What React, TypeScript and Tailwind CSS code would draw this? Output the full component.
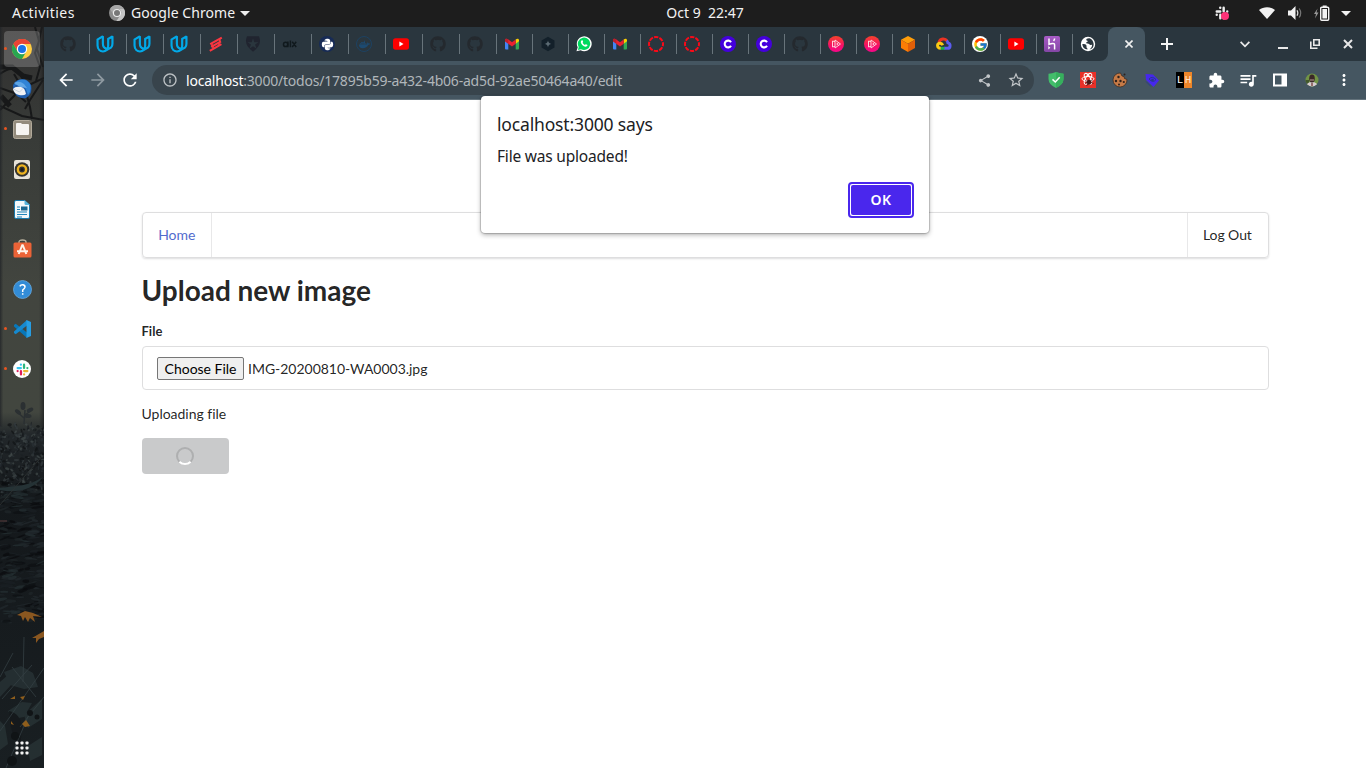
import React from "react";
import { FaGithub, FaDocker, FaPython } from "react-icons/fa";
import { SiUdacity } from "react-icons/si";
import { FcGoogle } from "react-icons/fc";
import {
  MdArrowBack,
  MdArrowForward,
  MdRefresh,
  MdInfoOutline,
  MdShare,
  MdStarBorder,
  MdExtension,
  MdQueueMusic,
  MdMoreVert,
} from "react-icons/md";

/* ---------- favicons ---------- */

const Github = () => <FaGithub size={16} color="#24292e" />;
const Udacity = () => <SiUdacity size={16} color="#02a9e8" stroke="#02a9e8" strokeWidth="1.600" className="overflow-visible" />;
const Youtube = () => (
  <svg width="16" height="16" viewBox="0 0 16 16">
    <rect y="2.3" width="16" height="11.4" rx="2.6" fill="#f00" />
    <path d="M6.4 5.6v4.8L10.5 8z" fill="#fff" />
  </svg>
);
const Stripe = () => (
  <svg width="16" height="16" viewBox="0 0 16 16" stroke="#fb3640" fill="none" strokeWidth="2.100">
    <path d="M2.200 8.200 13.800 1.700M3.200 10.800 13 5.300M1.800 14.800 13.400 8.200" />
    <path d="M4 7.500v3M11.800 3v3.500M5 10v2.500M11 6v3" strokeWidth="1.600" />
  </svg>
);
const Auth0 = () => (
  <svg width="16" height="16" viewBox="0 0 16 16">
    <path
      d="M2 .3h12q2.400 6-.8 10.200Q11 13.500 8 15.800 5 13.500 2.800 10.500-.4 6.300 2 .3zM8 2.300 6.700 6.200H2.600l3.300 2.400-1.300 4L8 10.200l3.400 2.400-1.300-4 3.300-2.400H9.300z"
      fill="#20242f"
      fillRule="evenodd"
    />
  </svg>
);
const Alx = () => (
  <svg width="16" height="16" viewBox="0 0 16 16" fill="none" stroke="#10191d" strokeWidth="1.500">
    <circle cx="3.600" cy="8.400" r="2.100" />
    <path d="M5.900 5.500v5.800M8.400 4.400v6.900M10.200 5.800l4 5.200M14.200 5.800l-4 5.200" />
  </svg>
);
const Python = () => (
  <span className="flex size-4 items-center justify-center rounded-full bg-[#172b56]">
    <FaPython size={13} color="#fff" />
  </span>
);
const Docker = () => (
  <span className="flex size-4 items-center justify-center rounded-full border border-[#1d4262]">
    <FaDocker size={11} color="#1d4a70" />
  </span>
);
const Gmail = () => (
  <svg width="16" height="16" viewBox="0 0 16 16">
    <path d="M1 4.5 4.3 7v6.6H2a1 1 0 0 1-1-1z" fill="#4285f4" />
    <path d="M11.7 7 15 4.5v8.1a1 1 0 0 1-1 1h-2.3z" fill="#34a853" />
    <path d="M11.7 3.5c1.7-1.3 3.3-.9 3.3 1v.7L11.7 7.7z" fill="#fbd000" />
    <path d="M1 4.3c0-1.8 1.7-2 3.3-.8L8 6.3l3.7-2.8v4.2L8 10.5 4.3 7.7 1 5.2z" fill="#ea2130" />
    <path d="M1 4.3C1 3.4 1.6 2.7 2.6 2.8c.6 0 1.1.3 1.7.7v4.2L1 5.2z" fill="#b9202c" />
  </svg>
);
const Hexagon = () => (
  <svg width="16" height="16" viewBox="0 0 16 16">
    <path d="M8 .7 14.5 4.4v7.2L8 15.3 1.5 11.6V4.4z" fill="#13202a" />
    <path d="M8 4.600Q8.400 7.600 11.400 8 8.400 8.400 8 11.400 7.600 8.400 4.600 8 7.600 7.600 8 4.600z" fill="#5b6a73" />
  </svg>
);
const Whatsapp = () => (
  <svg width="16" height="16" viewBox="0 0 17 17">
    <path d="M.5 16.300 1.800 12A7.900 7.900 0 1 1 5 15.200z" fill="#fff" />
    <path d="M2 14.900 2.900 11.700A6.600 6.600 0 1 1 5.300 14z" fill="#00d95f" />
    <path
      d="M5.900 4.800c.4-.5 1-.5 1.200 0l.5 1.300c.1.400-.5.900-.6 1.200.5 1 1.400 1.800 2.400 2.200.4-.1.800-.9 1.200-.8l1.300.6c.5.300.2 1-.1 1.400-1 .9-2.200.8-3.400.2A7 7 0 0 1 5.400 7.700c-.5-1.100-.3-2.200.5-2.900z"
      fill="#fff"
    />
  </svg>
);
const Canvas = () => (
  <svg width="16" height="16" viewBox="0 0 16 16" fill="none">
    <circle cx="8" cy="8" r="7" stroke="#fb0a18" strokeWidth="2" strokeDasharray="4.300 1.198" strokeDashoffset="2.150" />
  </svg>
);
const CircleC = () => (
  <svg width="16" height="16" viewBox="0 0 16 16">
    <circle cx="8" cy="8" r="8" fill="#4400dd" />
    <path d="M11 6.200A3.400 3.400 0 1 0 11 9.800" fill="none" stroke="#fff" strokeWidth="2.100" />
  </svg>
);
const Pluralsight = () => (
  <svg width="16" height="16" viewBox="0 0 16 16">
    <defs>
      <linearGradient id="ps" x1="0" y1="0" x2="0" y2="1">
        <stop offset="0" stopColor="#f5432a" />
        <stop offset=".6" stopColor="#f71067" />
        <stop offset="1" stopColor="#f6078a" />
      </linearGradient>
    </defs>
    <circle cx="8" cy="8" r="8" fill="url(#ps)" />
    <path d="M7 4v8l5.500-4zM7 5.700 4.500 5v6L7 10.300" fill="none" stroke="#ffd0dc" strokeWidth="1" />
    <path d="M8.700 6.500v3L10.800 8z" fill="#ffd0dc" />
  </svg>
);
const Cube = () => (
  <svg width="16" height="16" viewBox="0 0 16 16">
    <path d="M8 0l7 3.800L8 7.800 1 3.800z" fill="#ff9d0a" />
    <path d="M1 3.800l7 4V16l-7-4z" fill="#fb7d05" />
    <path d="M15 3.800l-7 4V16l7-4z" fill="#e15f08" />
  </svg>
);
const GCloud = () => (
  <svg width="16" height="16" viewBox="0 0 16 16" fill="none" strokeWidth="2.900">
    <path d="M3 6.300C4 2.300 9 1.900 11.200 5" stroke="#ea3323" />
    <path d="M10.600 4.600c.9.700 1.200 1.500 1.300 2.300 3 .6 3 5.400-.4 5.400H8" stroke="#5b5cf0" />
    <path d="M8.500 12.300H4" stroke="#1faf4b" />
    <path d="M4.600 12.300C.6 12 .7 7.200 3.800 7.200c1.500 0 2.500 1 2.900 2" stroke="#fbc913" />
  </svg>
);
const Google = () => (
  <span className="flex size-4 items-center justify-center rounded-full bg-white">
    <FcGoogle size={15} />
  </span>
);
const Heroku = () => (
  <svg width="16" height="16" viewBox="0 0 16 16">
    <defs>
      <linearGradient id="hk" x1="0" y1="0" x2="0" y2="1">
        <stop offset="0" stopColor="#a85cc6" />
        <stop offset="1" stopColor="#8346a5" />
      </linearGradient>
    </defs>
    <rect width="16" height="16" rx="1.800" fill="url(#hk)" />
    <path d="M5 2.600v5.800c1.900-.8 5.600-1.900 5.600.6v4.400M10.600 2.600c0 1-.5 1.700-1.100 2.300" fill="none" stroke="#fff" strokeWidth="1.500" />
    <path d="M4.300 10v3.500L6.300 11.800z" fill="#fff" />
  </svg>
);
const Globe = () => (
  <svg width="16" height="16" viewBox="0 0 16 16">
    <circle cx="8" cy="8" r="7.200" fill="#fff" />
    <path
      d="M9.500 2.200Q6 2 6.200 4.200q1.700 0 1.500 1.600Q5.500 6 6.600 7.500q2.800-.5 3.400 1.400l2.200-.2q.2 2.300-2.500 4.800Q13.800 12.500 13.700 8 13 3.500 9.500 2.200zM2.300 8q3.300-.4 4.200 1.400v2q1 .2 1 2.200Q2.600 13 2.300 8z"
      fill="#2a363e"
    />
  </svg>
);

const wideTabs = [Github, Udacity, Udacity, Udacity, Stripe, Auth0, Alx, Python, Docker, Youtube, Github, Github];
const narrowTabs = [
  Gmail, Hexagon, Whatsapp, Gmail, Canvas, Canvas, CircleC, CircleC, Github,
  Pluralsight, Pluralsight, Cube, GCloud, Google, Youtube, Heroku, Globe,
];

/* ---------- desktop bar ---------- */

const SlackMarks = ({ size, colors }: { size: number; colors: string[] }) => (
  <svg width={size} height={size} viewBox="0 0 16 16" strokeWidth="2.800" strokeLinecap="round" fill="none">
    <path d="M6 2v0M2 6.200h4" stroke={colors[0]} />
    <path d="M9.900 2v4M14 6.200v0" stroke={colors[1]} />
    <path d="M10 9.900h4M10 14v0" stroke={colors[2]} />
    <path d="M6.100 10v4M2 9.900v0" stroke={colors[3]} />
  </svg>
);

function TopBar() {
  return (
    <header className="grid h-[27px] shrink-0 grid-cols-3 items-center bg-[#1d1d1d] pb-px text-[14px] leading-[26px] text-[#f2f2f2]">
      <div className="flex items-center pl-3">
        <span className="w-[97px] tracking-[0.45px]">Activities</span>
        <svg width="16" height="16" viewBox="0 0 16 16">
          <circle cx="8" cy="8" r="8" fill="#8b8b8b" />
          <path d="M8 0a8 8 0 0 1 7 4H8a4 4 0 0 0-3.600 5.600L1 4a8 8 0 0 1 7-4z" fill="#a7a7a7" />
          <path d="M15 4a8 8 0 0 1-7.500 12l3.900-6a4 4 0 0 0-1.200-6z" fill="#c4c4c4" />
          <circle cx="8" cy="8" r="4.100" fill="#eee" />
          <circle cx="8" cy="8" r="3" fill="#777" />
        </svg>
        <span className="ml-[6px] tracking-[0.06px]">Google Chrome</span>
        <svg className="ml-[5px]" width="10" height="5" viewBox="0 0 10 5">
          <path d="M0 0h10L5 5z" fill="#eee" />
        </svg>
      </div>
      <div className="whitespace-pre pl-[211px]">Oct 9  22:47</div>
      <div className="flex items-center justify-end pr-[15px]">
        <span className="relative mr-[30px] flex">
          <SlackMarks size={14} colors={["#eee", "#eee", "#ddd", "#eee"]} />
          <i className="absolute top-[6px] left-[6px] size-2 rounded-full bg-[#ff3378]" />
        </span>
        <svg width="16" height="12" viewBox="0 0 16 12">
          <path d="M0 3C4.500-.8 11.500-.8 16 3L8 12z" fill="#f2f2f2" />
        </svg>
        <svg className="ml-[13px]" width="16" height="14" viewBox="0 0 16 14" fill="none">
          <path d="M0 4.500h3L7.500 0v14L3 9.500H0z" fill="#f2f2f2" />
          <path d="M9 4.300q1.700 2.700 0 5.400" stroke="#ddd" strokeWidth="1.200" />
          <path d="M11.200 2.500q3 4.500 0 9" stroke="#777" strokeWidth="1.200" />
        </svg>
        <svg className="ml-[10px]" width="16" height="16" viewBox="0 0 16 16">
          <path d="M3.600 3.500 0 9h2l-1 4.500L4.500 7.500h-2z" fill="#999" />
          <rect x="6.700" y="2.200" width="8" height="13" rx="1" fill="none" stroke="#f2f2f2" strokeWidth="1.400" />
          <path d="M8.700.5h4V2h-4zM8.400 4h4.600v9.500H8.400z" fill="#f2f2f2" />
        </svg>
        <svg className="ml-[11px]" width="10" height="5" viewBox="0 0 10 5">
          <path d="M0 0h10L5 5z" fill="#f2f2f2" />
        </svg>
      </div>
    </header>
  );
}

/* ---------- dock ---------- */

const bush = ["#343c3e", "#14181b", "#293134", "#0f1214", "#424a4a", "#1b2023"];
const undergrowth = ["#1f272a", "#0d1012", "#222a2d", "#0a0c0e", "#1a2023", "#253033"];

const leaves = Array.from({ length: 560 }, (_, i) => {
  const r = (k: number) => {
    const s = Math.sin((i + 1) * 12.9898 + k * 78.233) * 43758.5453;
    return s - Math.floor(s);
  };
  const inBush = i < 330;
  const x = r(1) * 48 - 2;
  return {
    x,
    y: inBush ? 395 + Math.abs(x - 22) * 0.2 + r(2) * 68 : 455 + r(2) * 140,
    len: inBush ? 2 + r(3) * 3.5 : 4 + r(3) * 12,
    w: inBush ? 1 + r(4) * 2 : 1 + r(4) * 2.6,
    angle: inBush ? r(5) * 180 : r(5) * 40 - 25,
    fill: (inBush ? bush : undergrowth)[Math.floor(r(6) * 6)],
  };
});

const Wallpaper = () => (
  <svg className="absolute inset-0" width="44" height="741" viewBox="0 0 44 741">
    <defs>
      <linearGradient id="wall" x1="0" y1="0" x2="0" y2="1">
        <stop offset="0" stopColor="#302f2f" />
        <stop offset=".15" stopColor="#383b38" />
        <stop offset=".35" stopColor="#42453f" />
        <stop offset=".52" stopColor="#42463f" />
        <stop offset=".55" stopColor="#22272a" />
        <stop offset=".64" stopColor="#14181b" />
        <stop offset="1" stopColor="#191f22" />
      </linearGradient>
      <linearGradient id="edge" x1="0" y1="0" x2="1" y2="0">
        <stop offset="0" stopColor="#202327" stopOpacity=".8" />
        <stop offset=".08" stopColor="#292c2c" stopOpacity="0" />
        <stop offset=".88" stopColor="#292c2c" stopOpacity="0" />
        <stop offset="1" stopColor="#17191a" stopOpacity=".7" />
      </linearGradient>
    </defs>
    <rect width="44" height="741" fill="url(#wall)" />
    <g fill="none" stroke="#171819">
      <path d="M35 0l4 14-4 12 5 14-4 14M42 0l-5 22 6 18M0 47c9-7 16-7 21 2l6 10 17-8M0 83l14-14 7-10-7-12M0 61l17 6 9 8M25 62l5 18 2 12M43 53 30 73l-5 9M0 79l22 10 22 4" strokeWidth="2" />
      <path d="M0 40h12l11 9 9 2M1 69l9 10" strokeWidth="5" />
    </g>
    <rect width="44" height="400" fill="url(#edge)" />
    <path d="M24 397l1-14M24 391l-8-7M25 388l7-5" stroke="#2b3032" strokeWidth="1.500" fill="none" />
    <g fill="#2b3032">
      <ellipse cx="23" cy="379" rx="2.500" ry="4" />
      <ellipse cx="18" cy="385" rx="3.500" ry="2" transform="rotate(40 18 385)" />
      <ellipse cx="30" cy="383" rx="3.500" ry="2" transform="rotate(-25 30 383)" />
      <ellipse cx="28" cy="389" rx="3.500" ry="2" />
    </g>
    {leaves.map((l, i) => (
      <ellipse key={i} rx={l.len / 2} ry={l.w / 2} fill={l.fill} opacity=".7" transform={`translate(${l.x} ${l.y}) rotate(${l.angle})`} />
    ))}
    <path d="M0 461c15-2 27-1 43-11-11 14-28 16-43 13z" fill="#253235" />
    <path d="M0 478l43-50" stroke="#303334" strokeWidth=".8" />
    <path d="M0 494h7" stroke="#5a3c3c" strokeWidth="1" />
    <path d="M4 645l17-6 12 7 5 14-14 2-14-4zM8 684l14-9 10 1-8 14-11 2zM24 688l18-16v20l-14 9zM0 655l8-7 3 10-11 12zM28 719l14-9v18l-12 6zM0 694l5 5 3 18-8 6z" fill="#283336" opacity=".8" />
    <path d="M9 684q11 2 13 16l-2 22q-9-12-11-38z" fill="#15191c" />
    <path d="M0 704l44-63M6 741l24-56M23 655l1-45M0 650l13-24M12 640l24 30M2 672l30-34M20 700l24-30" stroke="#343f42" strokeWidth=".8" fill="none" />
    <g fill="#101416">
      <circle cx="30" cy="686" r="3" />
      <circle cx="37" cy="690" r="2.500" />
      <circle cx="15" cy="709" r="4" />
      <circle cx="12" cy="734" r="5" />
    </g>
    <path d="M17 588l8-4 8 2 9 4-9-1 2 6-5-4-2 4-3-5-2 4-2-5zM32 611l12-7v6l-5 2-3 4v-5z" fill="#8a5720" />
    <path d="M10 672l5-3v3zM20 670l5-1-2 4zM22 697l4-4 4 6-5 1zM11 694l3 4-3-1z" fill="#8f5e1c" />
  </svg>
);

const DockChrome = () => (
  <svg width="20" height="20" viewBox="0 0 20 20">
    <circle cx="10" cy="10" r="10" fill="#ffcd43" />
    <path d="M1.300 5A10 10 0 0 1 18.700 5H10L5.700 12.500z" fill="#e94335" />
    <path d="M1.300 5 5.700 12.500Q10 16.500 14.300 12.500L10 20A10 10 0 0 1 1.300 5z" fill="#28a650" />
    <circle cx="10" cy="10" r="5.200" fill="#fff" />
    <circle cx="10" cy="10" r="4" fill="#1a73e8" />
  </svg>
);
const DockThunderbird = () => (
  <svg width="20" height="20" viewBox="0 0 20 20">
    <path d="M6 1q9-3 13 5 2 9-5 13-6 1-10-3Q.5 10 1 6q2-4 5-5z" fill="#1f5cab" />
    <path d="M5 2q8-4 13 3 2 7-2 11-2-8-7-10-6-1-7 1z" fill="#3184d6" />
    <path d="M2 4q5-3 10 1l3 4-7-1z" fill="#5fa6e6" />
    <path d="M1 10q2-3 8-2 4 1 5 7-2 2-7 1-5-1-6-6z" fill="#f0f2f6" />
    <path d="M1.500 10l6 3 4-4" fill="none" stroke="#c2ccda" strokeWidth=".8" />
  </svg>
);
const DockFiles = () => (
  <svg width="19" height="19" viewBox="0 0 19 19">
    <rect x=".5" y=".5" width="18" height="18" rx="2" fill="#938b7c" stroke="#b2aa9b" />
    <path d="M3 4q0-1 1-1h4l1 1h6q1 0 1 1v9q0 1-1 1H4q-1 0-1-1z" fill="#f6f4f1" />
  </svg>
);
const DockMusic = () => (
  <svg width="16" height="19" viewBox="0 0 16 19">
    <rect width="16" height="19" rx="2" fill="#e7e3da" />
    <circle cx="8" cy="9.500" r="7.300" fill="#34332f" />
    <circle cx="8" cy="9.500" r="4.100" fill="none" stroke="#efb41f" strokeWidth="2.400" />
    <circle cx="8" cy="9.500" r="1.600" fill="#191919" />
  </svg>
);
const DockWriter = () => (
  <svg width="16" height="19" viewBox="0 0 16 19">
    <path d="M2 .5h8.500L15.500 5v12q0 1.500-1.500 1.500H2Q.5 18.500.5 17V2Q.5.500 2 .5z" fill="#f3f8fb" stroke="#1979ad" />
    <path d="M10.500 0 16 5h-4q-1.500 0-1.500-1.500z" fill="#56b2db" />
    <path d="M3 7h3M3 9.500h3M3 12h10M3 14.500h10M3 17h5" stroke="#2184ba" strokeWidth="1.200" />
    <path d="M7 6.500h6.500v4H7z" fill="#1b6791" />
  </svg>
);
const DockSoftware = () => (
  <svg width="19" height="19" viewBox="0 0 19 19" className="-mt-0.5">
    <path d="M6 5V3q0-2 3.500-2T13 3v2" fill="none" stroke="#b9b19e" strokeWidth="1.400" />
    <rect x=".5" y="3.500" width="18" height="15" rx="1.500" fill="#eb6337" />
    <path d="M9.500 5.500 5.700 15M9.500 5.500l3.800 9.500M4 12.200h11" stroke="#fff3ea" strokeWidth="2" fill="none" />
  </svg>
);
const DockHelp = () => (
  <svg width="19" height="19" viewBox="0 0 19 19">
    <circle cx="9.500" cy="9.500" r="9" fill="#328cd7" stroke="#67abe1" strokeWidth=".8" />
    <path d="M6.800 6.400q1-2 3.200-1.700 2.400.7 1.900 2.700Q11.500 8.800 9.700 10v1.900M9.700 13.300v1.500" fill="none" stroke="#fff" strokeWidth="1.500" />
  </svg>
);
const DockCode = () => (
  <svg width="19" height="18" viewBox="0 0 19 18">
    <path d="M1 5l1.700-1.300L14 12.500V18L1 6.500z" fill="#0877b9" />
    <path d="M1 13l1.700 1.300L14 5.500V0L1 11.500z" fill="#1689cf" />
    <path d="M13.500 0 18 2v14l-4.500 2z" fill="#279de2" />
  </svg>
);
const DockSlack = () => (
  <span className="flex size-[18px] items-center justify-center rounded-full bg-white">
    <SlackMarks size={13} colors={["#36c5f0", "#2eb67d", "#ecb22e", "#e01e5a"]} />
  </span>
);

const dockItems = [
  { Icon: DockChrome, running: true, active: true },
  { Icon: DockThunderbird },
  { Icon: DockFiles, running: true },
  { Icon: DockMusic },
  { Icon: DockWriter },
  { Icon: DockSoftware },
  { Icon: DockHelp },
  { Icon: DockCode, running: true },
  { Icon: DockSlack, running: true },
];

function Dock() {
  return (
    <aside className="relative w-11 shrink-0 overflow-hidden">
      <Wallpaper />
      <div className="relative flex h-full flex-col items-center pt-1">
        {dockItems.map(({ Icon, running, active }, i) => (
          <div key={i} className="flex h-10 w-11 items-start justify-center">
            <div className={`relative flex size-9 items-center justify-center rounded ${active ? "bg-white/20" : ""}`}>
              {running && <i className="absolute top-4 left-0 size-[3px] rounded-full bg-[#e95420]" />}
              <Icon />
            </div>
          </div>
        ))}
        <svg className="mt-auto mb-[13px]" width="14" height="14" viewBox="0 0 14 14" fill="#f2f2f2">
          {[0, 5, 10].map((y) => [0, 5, 10].map((x) => <rect key={`${x}${y}`} x={x + 0.5} y={y + 0.5} width="3" height="3" rx=".8" />))}
        </svg>
      </div>
    </aside>
  );
}

/* ---------- browser ---------- */

function Tab({ Icon, wide, first }: { Icon: React.FC; wide?: boolean; first?: boolean }) {
  return (
    <div className={`flex h-5 shrink-0 items-center ${wide ? "w-[37px]" : "w-9"}`}>
      <i className={`h-5 w-px ${first ? "" : "bg-[#68747b]"}`} />
      <span className="ml-[7px] flex w-4 justify-center">
        <Icon />
      </span>
    </div>
  );
}

function TabStrip() {
  return (
    <div className="flex h-[34px] items-center bg-[#2a363e] pl-2">
      {wideTabs.map((Icon, i) => (
        <Tab key={i} Icon={Icon} wide first={i === 0} />
      ))}
      {narrowTabs.map((Icon, i) => (
        <Tab key={i} Icon={Icon} />
      ))}
      <div className="relative flex h-[34px] w-[37px] items-center justify-center rounded-t-lg bg-[#455661] pl-[5px]">
        <svg className="absolute bottom-0 -left-2" width="8" height="8">
          <path d="M8 0v8H0a8 8 0 0 0 8-8z" fill="#455661" />
        </svg>
        <svg className="absolute -right-2 bottom-0" width="8" height="8">
          <path d="M0 0v8h8A8 8 0 0 1 0 0z" fill="#455661" />
        </svg>
        <svg width="8" height="8" viewBox="0 0 8 8" stroke="#f1f1f1" strokeWidth="1.600">
          <path d="M.5.500l7 7M7.500.500l-7 7" />
        </svg>
      </div>
      <svg className="ml-4" width="12" height="12" viewBox="0 0 12 12" stroke="#f5f5f5" strokeWidth="2">
        <path d="M6 0v12M0 6h12" />
      </svg>
      <svg className="ml-[67px]" width="10" height="7" viewBox="0 0 10 7" fill="none" stroke="#e8e8e8" strokeWidth="1.800">
        <path d="M.6.900 5 5.300 9.400.900" />
      </svg>
      <svg className="ml-[28px]" width="10" height="12" viewBox="0 0 10 12">
        <path d="M0 9h10v2H0z" fill="#e8e8e8" />
      </svg>
      <svg className="ml-[22px]" width="10" height="10" viewBox="0 0 10 10" fill="none" stroke="#e8e8e8" strokeWidth="1.600">
        <path d="M3.800.800h5.400v5.400H3.800zM.8 2.500v6.700h6.700" />
      </svg>
      <svg className="ml-[23px]" width="10" height="10" viewBox="0 0 10 10" stroke="#e8e8e8" strokeWidth="2">
        <path d="M1 1l8 8M9 1 1 9" />
      </svg>
    </div>
  );
}

function Extensions() {
  return (
    <div className="ml-[14px] flex items-center gap-4">
      <svg width="16" height="16" viewBox="0 0 16 16">
        <path d="M8 0q4 1.800 7.500 1.800V7q0 5.500-7.500 9Q.5 12.500.5 7V1.800Q4 1.800 8 0z" fill="#43bd6b" />
        <path d="M8 0q4 1.800 7.500 1.800V7q0 5.500-7.500 9z" fill="#36af5d" />
        <path d="M4.500 7.400 7.300 10l4.400-4.800" stroke="#fff" strokeWidth="1.500" fill="none" />
      </svg>
      <svg width="16" height="16" viewBox="0 0 16 16">
        <rect width="16" height="16" fill="#e93028" />
        <g fill="none" stroke="#fff" strokeWidth="1">
          <ellipse cx="8" cy="6.800" rx="6" ry="2.400" />
          <ellipse cx="8" cy="6.800" rx="6" ry="2.400" transform="rotate(60 8 6.800)" />
          <ellipse cx="8" cy="6.800" rx="6" ry="2.400" transform="rotate(120 8 6.800)" />
        </g>
        <ellipse cx="9" cy="10.200" rx="2.200" ry="2.600" fill="#4a1717" />
        <path d="M5.500 8.500 8 10l-3 1.500M12.500 8 10 10l3.500 1.500M6.500 14l1.500-2" fill="none" stroke="#4a1717" strokeWidth=".8" />
      </svg>
      <svg width="16" height="16" viewBox="0 0 16 16">
        <path d="M8.500 1 10 4l2 .5.5 2 2.500 1A7 7 0 1 1 8.500 1z" fill="#c67a46" stroke="#33251e" strokeWidth=".7" />
        <g fill="#30211c">
          <circle cx="6.500" cy="5" r="1.200" />
          <circle cx="4" cy="9" r="1.200" />
          <circle cx="8.500" cy="9" r="1.200" />
          <circle cx="7" cy="12.500" r="1" />
          <circle cx="11.800" cy="10" r="1.100" />
          <circle cx="12.500" cy="2.500" r="1" />
        </g>
      </svg>
      <svg width="16" height="16" viewBox="0 0 16 16">
        <path d="M1.500 2 9 2.500l6 6-5.500 6.500L2 8z" fill="#4627ed" />
        <path d="M5 7q3-3.500 7 .5-3 4-7-.5zM2 9.500l5 5" fill="none" stroke="#273b8c" />
        <circle cx="8.500" cy="8" r="1.300" fill="#273b8c" />
      </svg>
      <span className="flex size-4 font-['Liberation_Mono',monospace] text-[11px] leading-4 text-white">
        <span className="w-2 bg-black text-center">L</span>
        <span className="w-2 bg-[#ee852a] text-center text-[#ffe4c7]">H</span>
      </span>
      <MdExtension size={17} color="#fff" className="-mr-px" />
      <MdQueueMusic size={20} color="#fff" className="-mx-0.5" />
      <svg width="16" height="16" viewBox="0 0 16 16">
        <path d="M1 1.500h14v13H1zM3 3.500v9h6.500v-9z" fill="#fff" fillRule="evenodd" />
      </svg>
      <svg width="16" height="16" viewBox="0 0 16 16">
        <defs>
          <clipPath id="avatar"><circle cx="8" cy="8" r="6.500" /></clipPath>
        </defs>
        <g clipPath="url(#avatar)">
          <rect width="16" height="16" fill="#719445" />
          <path d="M0 8h5v8H0z" fill="#42582d" />
          <path d="M2 16q0-6 6-6t6 6z" fill="#d5cbd0" />
          <ellipse cx="8" cy="6.500" rx="2.800" ry="4" fill="#3b2827" />
          <path d="M6 7.500h4v1H6z" fill="#b69a91" />
          <path d="M7.300 11h1.400v3H7.300z" fill="#7b4640" />
        </g>
      </svg>
      <MdMoreVert size={18} color="#fff" className="-ml-px" />
    </div>
  );
}

function Toolbar() {
  return (
    <div className="flex h-[39px] items-center border-b border-[#64737c] bg-[#455661] pl-3">
      <MdArrowBack size={20} color="#fff" />
      <MdArrowForward size={20} color="#8f9aa1" className="ml-3" />
      <MdRefresh size={20} color="#fff" className="ml-3" />
      <div className="ml-3 flex h-[30px] w-[882px] items-center rounded-full bg-[#38444c] pr-[9px] pl-[10px]">
        <MdInfoOutline size={16} color="#bdc2c5" />
        <span className="ml-2 grow text-[14px] leading-[19px] tracking-[-0.21px] text-[#b0b6ba]">
          <span className="text-white">localhost</span>:3000/todos/17895b59-a432-4b06-ad5d-92ae50464a40/edit
        </span>
        <MdShare size={15} color="#c2c6c9" />
        <MdStarBorder size={18} color="#c2c6c9" className="ml-[15px]" />
      </div>
      <Extensions />
    </div>
  );
}

function Page() {
  return (
    <main className="grow bg-white pt-[112px] pr-[97px] pl-[97.5px] font-['Lato',sans-serif] text-[14px] leading-5 tracking-[-0.02px] text-black/87">
      <nav className="flex h-[46px] items-stretch justify-between rounded border border-[#dededf] shadow-[0_1px_2px_0_rgba(34,36,38,0.15)]">
        <a className="flex w-[69.500px] items-center justify-center border-r border-[#e8e8e9] text-[#526bcd]">Home</a>
        <a className="flex w-[81px] items-center border-l border-[#e8e8e9] pl-[15px] tracking-[-0.08px]">Log Out</a>
      </nav>
      <h1 className="mt-[14px] text-[28px] leading-9 font-bold">Upload new image</h1>
      <label className="mt-[14px] block text-[13px] leading-[18px] font-bold tracking-normal">File</label>
      <div className="mt-[6px] flex h-11 items-center rounded border border-[#dededf] pl-[14px]">
        <button className="h-[23px] w-[87px] rounded-[2px] border border-[#767676] bg-[#efefef] pt-px pl-px leading-5 text-black">Choose File</button>
        <span className="ml-[4.500px] pt-0.5">IMG-20200810-WA0003.jpg</span>
      </div>
      <p className="mt-[14px]">Uploading file</p>
      <button className="mt-[14px] flex h-9 w-[87px] items-center justify-center rounded bg-[#c9cacb]">
        <svg width="18" height="18" viewBox="0 0 18 18" fill="none" strokeWidth="2">
          <circle cx="9" cy="9" r="8" stroke="#aeafb0" />
          <path d="M3.400 14.700A8 8 0 0 0 14.600 14.700" stroke="#fff" />
        </svg>
      </button>
    </main>
  );
}

function AlertDialog() {
  return (
    <div role="alertdialog" className="absolute top-[96px] left-[481px] flex h-[137px] w-[448px] flex-col rounded bg-white pt-4 pr-[15px] pl-4 text-[#202124] shadow-[0_0_1px_1px_rgba(0,0,0,0.18),0_2px_5px_rgba(0,0,0,0.3)]">
      <h2 className="text-[17.500px] leading-6 tracking-[-0.16px]">localhost:3000 says</h2>
      <p className="mt-2 text-[15.500px] leading-6 tracking-[-0.2px]">File was uploaded!</p>
      <button className="mt-[14px] self-end rounded border-2 border-[#4a27ed] bg-white p-px">
        <span className="block h-[30px] w-[60px] rounded-[2px] bg-[#4a27ed] text-center text-[14px] leading-[30px] font-semibold tracking-[0.5px] text-white">OK</span>
      </button>
    </div>
  );
}

export default function App() {
  return (
    <div className="relative flex h-[768px] w-[1366px] flex-col overflow-hidden font-['Noto_Sans',sans-serif]">
      <TopBar />
      <div className="flex min-h-0 grow">
        <Dock />
        <div className="flex min-w-0 grow flex-col">
          <TabStrip />
          <Toolbar />
          <Page />
        </div>
      </div>
      <AlertDialog />
    </div>
  );
}
